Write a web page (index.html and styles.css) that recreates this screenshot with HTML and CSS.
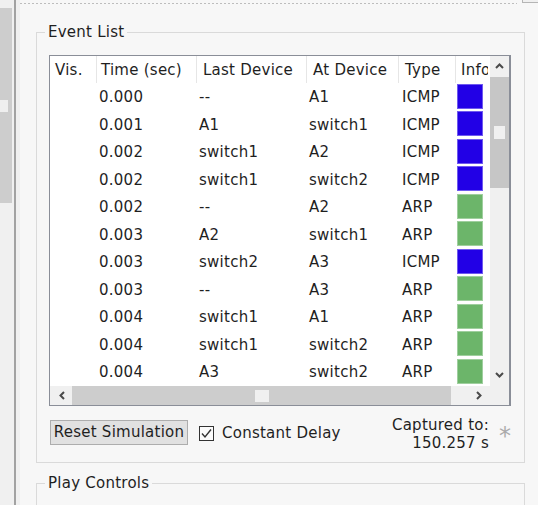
FILE: index.html
```html
<!DOCTYPE html>
<html>
<head>
<meta charset="utf-8">
<link rel="stylesheet" href="styles.css">
</head>
<body>
<div class="window">
  <div class="side">
    <div class="side-scroll"><div class="side-grip"></div></div>
  </div>
  <div class="divider"></div>
  <div class="main">
    <div class="panel">
      <div class="topbar"><div class="dots"></div><div class="tab-corner"></div></div>
      <fieldset class="group">
        <legend>Event List</legend>
        <div class="tbl">
          <div class="view">
            <div class="row head">
              <div class="hc h-vis">Vis.</div>
              <div class="hc h-time">Time (sec)</div>
              <div class="hc h-last">Last Device</div>
              <div class="hc h-at">At Device</div>
              <div class="hc h-type">Type</div>
              <div class="hc h-info"><span class="clip">Info</span></div>
            </div>
            <div class="row"><div></div><div class="dc">0.000</div><div class="dc">--</div><div class="dc">A1</div><div class="dc t">ICMP</div><div class="ic"><span class="sq icmp"></span></div></div>
            <div class="row"><div></div><div class="dc">0.001</div><div class="dc">A1</div><div class="dc">switch1</div><div class="dc t">ICMP</div><div class="ic"><span class="sq icmp"></span></div></div>
            <div class="row"><div></div><div class="dc">0.002</div><div class="dc">switch1</div><div class="dc">A2</div><div class="dc t">ICMP</div><div class="ic"><span class="sq icmp"></span></div></div>
            <div class="row"><div></div><div class="dc">0.002</div><div class="dc">switch1</div><div class="dc">switch2</div><div class="dc t">ICMP</div><div class="ic"><span class="sq icmp"></span></div></div>
            <div class="row"><div></div><div class="dc">0.002</div><div class="dc">--</div><div class="dc">A2</div><div class="dc t">ARP</div><div class="ic"><span class="sq arp"></span></div></div>
            <div class="row"><div></div><div class="dc">0.003</div><div class="dc">A2</div><div class="dc">switch1</div><div class="dc t">ARP</div><div class="ic"><span class="sq arp"></span></div></div>
            <div class="row"><div></div><div class="dc">0.003</div><div class="dc">switch2</div><div class="dc">A3</div><div class="dc t">ICMP</div><div class="ic"><span class="sq icmp"></span></div></div>
            <div class="row"><div></div><div class="dc">0.003</div><div class="dc">--</div><div class="dc">A3</div><div class="dc t">ARP</div><div class="ic"><span class="sq arp"></span></div></div>
            <div class="row"><div></div><div class="dc">0.004</div><div class="dc">switch1</div><div class="dc">A1</div><div class="dc t">ARP</div><div class="ic"><span class="sq arp"></span></div></div>
            <div class="row"><div></div><div class="dc">0.004</div><div class="dc">switch1</div><div class="dc">switch2</div><div class="dc t">ARP</div><div class="ic"><span class="sq arp"></span></div></div>
            <div class="row"><div></div><div class="dc">0.004</div><div class="dc">A3</div><div class="dc">switch2</div><div class="dc t">ARP</div><div class="ic"><span class="sq arp"></span></div></div>
          </div>
          <div class="vscroll">
            <div class="vbtn up"><svg width="9" height="6" viewBox="0 0 9 6"><polyline points="1,5 4.5,1.5 8,5" fill="none" stroke="#4a4a4a" stroke-width="2"/></svg></div>
            <div class="vthumb"><div class="grip"></div></div>
            <div class="vtrack"></div>
            <div class="vbtn down"><svg width="9" height="6" viewBox="0 0 9 6"><polyline points="1,1 4.5,4.5 8,1" fill="none" stroke="#4a4a4a" stroke-width="2"/></svg></div>
          </div>
          <div class="hscroll">
            <div class="hbtn left"><svg width="6" height="9" viewBox="0 0 6 9"><polyline points="5,1 1.5,4.5 5,8" fill="none" stroke="#4a4a4a" stroke-width="2"/></svg></div>
            <div class="hthumb"><div class="grip h"></div></div>
            <div class="htrack"></div>
            <div class="hbtn right"><svg width="6" height="9" viewBox="0 0 6 9"><polyline points="1,1 4.5,4.5 1,8" fill="none" stroke="#4a4a4a" stroke-width="2"/></svg></div>
          </div>
          <div class="corner"></div>
        </div>
        <div class="controls">
          <button class="btn" type="button">Reset Simulation</button>
          <span class="check"><svg width="13" height="13" viewBox="0 0 13 13"><polyline points="2,6.5 5,10 11,2.5" fill="none" stroke="#333" stroke-width="1.4"/></svg></span>
          <span class="check-label">Constant Delay</span>
          <div class="captured">Captured to:<br>150.257 s</div>
          <span class="star">*</span>
        </div>
      </fieldset>
      <fieldset class="group play">
        <legend>Play Controls</legend>
      </fieldset>
    </div>
  </div>
</div>
</body>
</html>
```
FILE: styles.css
```css
html, body {
  margin: 0;
  padding: 0;
}
body {
  background: #f0f0f0;
  font-family: "DejaVu Sans", Verdana, sans-serif;
  font-size: 15px;
  letter-spacing: 0.25px;
  color: #1f1f1f;
}
.window {
  display: flex;
  width: 538px;
  height: 505px;
  overflow: hidden;
}
.side {
  width: 14px;
  flex: none;
  background: #f0f0f0;
}
.side-scroll {
  width: 12px;
  height: 195px;
  margin-top: 8px;
  background: #cdcdcd;
  padding-top: 92px;
  box-sizing: border-box;
}
.side-grip {
  width: 8px;
  height: 12px;
  background: #efefef;
}
.divider {
  width: 2px;
  flex: none;
  background: #a2a2a2;
}
.main {
  flex: 1;
  display: flex;
  padding-left: 4px;
  background: #f0f0f0;
}
.panel {
  flex: 1;
  background: #f7f7f7;
  display: flex;
  flex-direction: column;
}
.topbar {
  display: flex;
  height: 7px;
  flex: none;
}
.dots {
  width: 497px;
  height: 1px;
  margin-top: 3px;
  background: repeating-linear-gradient(90deg, #bdbdbd 0 2px, transparent 2px 4px);
}
.tab-corner {
  margin-left: 5px;
  width: 16px;
  height: 3px;
  border: 1px solid #b5b5b5;
  border-top: none;
  border-right: none;
  box-sizing: border-box;
  background: #f0f0f0;
}
.group {
  margin: 16px 13px 0 16px;
  padding: 14px 13px 10px 8px;
  border: 1px solid #dadada;
  min-width: 0;
}
.group legend {
  padding: 0 3px;
  line-height: 18px;
  font-size: 15px;
}
.play {
  margin-top: 11px;
  height: 60px;
  flex: none;
}
.tbl {
  margin-left: 4px;
  width: 462px;
  height: 351px;
  box-sizing: border-box;
  border: 1px solid #8a8e98;
  border-right-width: 2px;
  background: #fff;
  display: grid;
  grid-template-columns: 440px 19px;
  grid-template-rows: 330px 19px;
}
.view {
  overflow: hidden;
}
.row {
  display: grid;
  grid-template-columns: 47px 100px 110px 92px 57px 34px;
  height: 27.5px;
  line-height: 27.5px;
  white-space: nowrap;
}
.row.head {
  height: 27px;
  line-height: 27px;
}
.hc {
  border-right: 1px solid #e6e6e6;
  overflow: hidden;
  padding-top: 1px;
  line-height: 26px;
}
.h-vis { padding-left: 5px; }
.h-time { padding-left: 4px; }
.h-last { padding-left: 6px; }
.h-at { padding-left: 6px; }
.h-type { padding-left: 6px; }
.h-info { padding-left: 5px; border-right: none; }
.clip {
  display: block;
  width: 27px;
  overflow: hidden;
}
.dc {
  padding-left: 2px;
  padding-top: 1px;
}
.dc.t {
  padding-left: 3px;
}
.ic {
  padding-left: 1px;
}
.sq {
  display: block;
  width: 26px;
  height: 25px;
  margin-top: 0.5px;
  box-sizing: border-box;
  border: 1px solid rgba(255, 255, 255, 0.35);
}
.sq.icmp { background: #2200e6; }
.sq.arp { background: #6cb56a; }

.vscroll {
  background: #f0f0f0;
  display: flex;
  flex-direction: column;
}
.vbtn {
  height: 21px;
  display: flex;
  justify-content: center;
  align-items: center;
  flex: none;
}
.vbtn.up { padding-bottom: 1px; box-sizing: border-box; }
.vbtn.down { height: 20px; align-items: flex-start; padding-top: 6px; box-sizing: border-box; }
.vthumb {
  height: 111px;
  background: #c6c6c6;
  display: flex;
  justify-content: center;
  align-items: center;
  flex: none;
}
.grip {
  width: 11px;
  height: 13px;
  background: #f0f0f0;
}
.grip.h {
  width: 14px;
  height: 12px;
}
.vtrack { flex: 1; }
.hscroll {
  background: #f0f0f0;
  display: flex;
}
.hbtn {
  width: 22px;
  display: flex;
  justify-content: center;
  align-items: center;
  flex: none;
}
.hbtn.left { padding-left: 2px; box-sizing: border-box; }
.hthumb {
  width: 379px;
  background: #cdcdcd;
  display: flex;
  justify-content: center;
  align-items: center;
  flex: none;
}
.htrack { flex: 1; }
.corner { background: #f0f0f0; }

.controls {
  display: flex;
  align-items: flex-start;
  margin: 10px 0 0 4px;
  height: 36px;
}
.btn {
  margin: 4px 0 0 1px;
  width: 138px;
  height: 25px;
  padding: 0 1px;
  border: 1px solid #adadad;
  background: #e1e1e1;
  font-family: "DejaVu Sans", Verdana, sans-serif;
  font-size: 15px;
  letter-spacing: 0.25px;
  color: #1f1f1f;
  line-height: 23px;
  white-space: nowrap;
}
.check {
  margin: 10px 0 0 11px;
  width: 15px;
  height: 15px;
  box-sizing: border-box;
  border: 1px solid #333;
  background: #fbfbfb;
  display: flex;
  flex: none;
}
.check-label {
  margin: 8px 0 0 8px;
  line-height: 18px;
}
.captured {
  margin-left: auto;
  text-align: right;
  line-height: 18px;
}
.star {
  width: 12px;
  margin-left: 10px;
  text-align: center;
  color: #ababab;
  font-size: 24px;
  line-height: 24px;
  margin-top: 8px;
  letter-spacing: 0;
}
```
